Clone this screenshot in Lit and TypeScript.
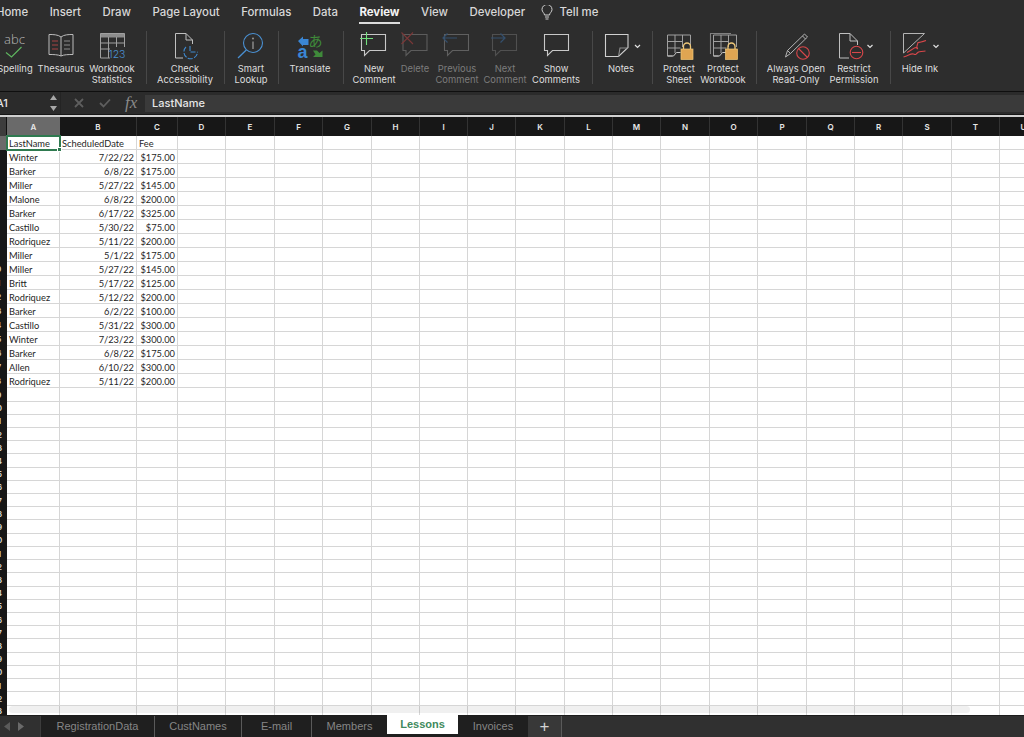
import { LitElement, html, css, svg, nothing } from 'lit';
import { customElement } from 'lit/decorators.js';

const TABS = ['Home', 'Insert', 'Draw', 'Page Layout', 'Formulas', 'Data', 'Review', 'View', 'Developer'];
const COLS = 'ABCDEFGHIJKLMNOPQRSTU'.split('');
const ROWS = [
  ['LastName', 'ScheduledDate', 'Fee'],
  ['Winter', '7/22/22', '$175.00'],
  ['Barker', '6/8/22', '$175.00'],
  ['Miller', '5/27/22', '$145.00'],
  ['Malone', '6/8/22', '$200.00'],
  ['Barker', '6/17/22', '$325.00'],
  ['Castillo', '5/30/22', '$75.00'],
  ['Rodriquez', '5/11/22', '$200.00'],
  ['Miller', '5/1/22', '$175.00'],
  ['Miller', '5/27/22', '$145.00'],
  ['Britt', '5/17/22', '$125.00'],
  ['Rodriquez', '5/12/22', '$200.00'],
  ['Barker', '6/2/22', '$100.00'],
  ['Castillo', '5/31/22', '$300.00'],
  ['Winter', '7/23/22', '$300.00'],
  ['Barker', '6/8/22', '$175.00'],
  ['Allen', '6/10/22', '$300.00'],
  ['Rodriquez', '5/11/22', '$200.00'],
];
const ROW_COUNT = 43;

const bubble = (x: number, c: string) => svg`
  <path d="M${x} 34.5H${x + 24}V50.5H${x + 8}L${x + 3} 55.5V50.5H${x}Z" fill="none" stroke=${c} stroke-width="1.1"/>`;

const chevron = (x: number) => svg`
  <path d="M${x - 2.5} 45l2.5 2.5 2.500-2.500" fill="none" stroke="#e0e0e0" stroke-width="1.2"/>`;

const lock = (x: number) => svg`
  <path d="M${x + 2.5} 49v-2.5a3.5 3.5 0 0 1 7 0V49" fill="none" stroke="#efc878" stroke-width="1.3"/>
  <rect x=${x} y="49" width="12" height="10.5" fill="#dfa552" stroke="#efc878" stroke-width=".7"/>`;

const sheetIcon = (x: number) => svg`
  <path d="M${x + 6} 56H${x + 1}V35H${x + 24}V47M${x + 1} 41.5H${x + 16}M${x + 1} 48H${x + 14}M${x + 8.5} 35V53M${x + 16} 35V47" fill="none" stroke="#a0a0a0" stroke-width="1"/>
  <path d="M${x + 1} 56H${x + 7}L${x + 10} 52.5H${x + 14}" fill="none" stroke="#c8c8c8" stroke-width="1"/>`;

const ICONS: Record<string, unknown> = {
  spelling: svg`
    <text x="14.500" y="44" text-anchor="middle" class="abc">abc</text>
    <path d="M6 52.500l5.500 4.500 10-10" fill="none" stroke="#5fb760" stroke-width="1.100"/>`,
  thesaurus: svg`
    <path d="M61 37c-3-2.500-8-2.500-12-2.500V54.500c4 0 9 0 12 1.500 3-1.500 8-1.500 12-1.500V34.500c-4 0-9 0-12 2.500zV56" fill="none" stroke="#bcbcbc" stroke-width="1"/>
    <path d="M52 41h6M52 45h6M52 49h6" stroke="#a84444" stroke-width="1.100"/>
    <path d="M64 41h6M64 45h6M64 49h6" stroke="#8c8c8c" stroke-width="1.100"/>`,
  stats: svg`
    <rect x="100.500" y="33.500" width="24" height="4" fill="#8c8c8c"/>
    <path d="M110 58H100.500V33.500H124.500V47M100.500 43H124.500M100.500 49H110M108.500 37V58M116.500 37V47" fill="none" stroke="#a0a0a0" stroke-width="1"/>
    <text x="125.500" y="58" text-anchor="end" class="num">123</text>`,
  check: svg`
    <path d="M183 58H175.500V33.500H186L192.500 40V44M186 33.500V40H192.500" fill="none" stroke="#c0c0c0" stroke-width="1"/>
    <path d="M186 47a6.800 6.800 0 1 0 11.500 5M190 46v6h7.500" fill="none" stroke="#3f8ad0" stroke-width="1.100" stroke-dasharray="5 1.500"/>`,
  smart: svg`
    <circle cx="253" cy="43" r="9.500" fill="none" stroke="#4a90d2" stroke-width="1.100"/>
    <path d="M246.300 50 238 58" stroke="#4a90d2" stroke-width="1.300"/>
    <path d="M253 41.500V49" stroke="#a0a0a0" stroke-width="1.200"/>
    <circle cx="253" cy="38.500" r=".9" fill="#a0a0a0"/>`,
  translate: svg`
    <path d="M298 41l5-4.500v2.500h5.500v6h-5.500v1.500z" fill="#3a86d4"/>
    <text x="302.500" y="58" text-anchor="middle" class="tr-a">a</text>
    <text x="315.500" y="46" text-anchor="middle" class="tr-j">あ</text>
    <path d="M322.500 57h-9.500l2.500-2.500-2.500-4h4l2.500 2.500 3-2.500z" fill="#3f8a3a"/>`,
  new: svg`${bubble(361.5, '#c8c8c8')}
    <path d="M366.500 32v13M360 38.500h13" stroke="#72e07e" stroke-width="1.100"/>`,
  delete: svg`${bubble(403, '#5c5c5c')}
    <path d="M401.500 32.500l11.500 11.500M413 32.500 401.500 44" stroke="#7a3838" stroke-width="1.100"/>`,
  previous: svg`${bubble(444.5, '#606060')}
    <path d="M443 38h14M447.500 33.500l-4.500 4.500 4.500 4.500" fill="none" stroke="#34506e" stroke-width="1.200"/>`,
  next: svg`${bubble(492.5, '#505050')}
    <path d="M491 38h14M500.500 33.500l4.500 4.500-4.500 4.500" fill="none" stroke="#34506e" stroke-width="1.200"/>`,
  show: svg`${bubble(544.5, '#c8c8c8')}`,
  notes: svg`
    <path d="M605.500 34.500H628V47.500L618.500 56.500H605.500Z" fill="none" stroke="#d0d0d0" stroke-width="1.100"/>
    <path d="M618.500 56.500 620 48H628" fill="none" stroke="#909090" stroke-width="1.100"/>
    ${chevron(637.5)}`,
  psheet: svg`${sheetIcon(666.5)}${lock(681)}`,
  pbook: svg`
    <path d="M710.500 54V33.500H731" fill="none" stroke="#808080" stroke-width="1.100"/>
    ${sheetIcon(712.5)}${lock(725.5)}`,
  readonly: svg`
    <path d="M785.500 57l2-6.500 17-16.500 3 3-17 16.500zM787.500 50.500l3 3M802.500 36l3 3" fill="none" stroke="#b4b4b4" stroke-width="1"/>
    <circle cx="803" cy="53" r="6.300" fill="none" stroke="#d8474a" stroke-width="1.100"/>
    <path d="M798.500 48.500l9 9" stroke="#d8474a" stroke-width="1.100"/>`,
  restrict: svg`
    <path d="M849 58H839.500V33.500H850L857.500 41V45M850 33.500V41H857.500" fill="none" stroke="#c0c0c0" stroke-width="1"/>
    <circle cx="856.500" cy="52.500" r="6.300" fill="#2d2d2d" stroke="#d8474a" stroke-width="1.100"/>
    <path d="M852 52.500h9" stroke="#d8474a" stroke-width="1.100"/>
    ${chevron(870)}`,
  ink: svg`
    <path d="M903.500 53V33.500H924.500Z" fill="none" stroke="#b4b4b4" stroke-width="1"/>
    <path d="M907 52.500c4-2 8-6 10-5s-2 4 1-5c2 0 5-1 8-2" fill="none" stroke="#d8474a" stroke-width="1.100"/>
    <path d="M903.500 57c5-1 7-4 10-3s1 1 5-2c2 0 4-1 7-1" fill="none" stroke="#d8474a" stroke-width="1.100"/>
    ${chevron(936)}`,
};

// w = slot width, c = icon centre on the page, dim = disabled command
type Cmd = { sep?: boolean; w: number; c?: number; icon?: string; label?: string[]; dim?: boolean };
const RIBBON: Cmd[] = [
  { w: 46, c: 15, icon: 'spelling', label: ['Spelling'] },
  { w: 46, c: 61, icon: 'thesaurus', label: ['Thesaurus'] },
  { w: 56, c: 112, icon: 'stats', label: ['Workbook', 'Statistics'] },
  { sep: true, w: 12 },
  { w: 66, c: 185, icon: 'check', label: ['Check', 'Accessibility'] },
  { sep: true, w: 12 },
  { w: 42, c: 251, icon: 'smart', label: ['Smart', 'Lookup'] },
  { sep: true, w: 12 },
  { w: 52, c: 310, icon: 'translate', label: ['Translate'] },
  { sep: true, w: 14 },
  { w: 48, c: 374, icon: 'new', label: ['New', 'Comment'] },
  { w: 34, c: 415, icon: 'delete', label: ['Delete'], dim: true },
  { w: 50, c: 457, icon: 'previous', label: ['Previous', 'Comment'], dim: true },
  { w: 46, c: 505, icon: 'next', label: ['Next', 'Comment'], dim: true },
  { w: 56, c: 556, icon: 'show', label: ['Show', 'Comments'] },
  { sep: true, w: 16 },
  { w: 42, c: 621, icon: 'notes', label: ['Notes'] },
  { sep: true, w: 20 },
  { w: 34, c: 679, icon: 'psheet', label: ['Protect', 'Sheet'] },
  { w: 54, c: 723, icon: 'pbook', label: ['Protect', 'Workbook'] },
  { sep: true, w: 12 },
  { w: 68, c: 796, icon: 'readonly', label: ['Always Open', 'Read-Only'] },
  { w: 48, c: 854, icon: 'restrict', label: ['Restrict', 'Permission'] },
  { sep: true, w: 24 },
  { w: 36, c: 920, icon: 'ink', label: ['Hide Ink'] },
];

const SHEETS = [
  ['RegistrationData', 'w-reg'],
  ['CustNames', 'w-cust'],
  ['E-mail', 'w-mail'],
  ['Members', 'w-mem'],
];

@customElement('app-root')
export class AppRoot extends LitElement {
  static styles = css`
    :host {
      display: flex;
      flex-direction: column;
      width: 1024px;
      height: 737px;
      overflow: hidden;
      background: #fff;
      font-family: Inter, "Liberation Sans", sans-serif;
    }

    .top {
      height: 91px;
      background: #2d2d2d;
      border-bottom: 1px solid #0f0f0f;
      flex: none;
    }
    .nav {
      display: flex;
      align-items: center;
      gap: 21.500px;
      height: 24px;
      margin-left: -4px;
      font-size: 11.400px;
      font-weight: 500;
      color: #d8d8d8;
    }
    .nav span { position: relative; line-height: 24px; white-space: nowrap; }
    .nav .on { color: #f4f4f4; font-weight: 700; }
    .nav .on::after {
      content: '';
      position: absolute;
      left: 0;
      right: 0;
      bottom: 0;
      height: 2px;
      background: #dcdcdc;
    }
    .tell { display: flex; align-items: center; gap: 7px; margin-left: -6px; }

    .ribbon {
      display: flex;
      margin: 7px 0 0 -8px;
      height: 56px;
    }
    .cmd {
      display: flex;
      flex-direction: column;
      align-items: center;
      flex: none;
    }
    .cmd svg { width: 40px; height: 30px; flex: none; overflow: visible; }
    .cmd .lbl {
      margin-top: 3px;
      font-size: 9.400px;
      line-height: 10.800px;
      text-align: center;
      white-space: nowrap;
      color: #dedede;
    }
    .cmd.dim .lbl { color: #7c7c7c; }
    .abc { font: 300 13px "Open Sans", sans-serif; fill: #b8b8b8; }
    .num { font: 300 10.500px Inter, sans-serif; fill: #4a90d2; }
    .tr-a { font: 700 18px "Liberation Sans", sans-serif; fill: #3a86d4; }
    .tr-j { font: 400 14px "Noto Sans CJK JP", sans-serif; fill: #3f8a3a; }
    .sep { display: flex; justify-content: center; flex: none; padding-bottom: 3px; }
    .sep i { display: block; width: 1px; background: #484848; }

    .formula {
      display: flex;
      align-items: center;
      height: 22px;
      background: #2b2b2b;
      flex: none;
      color: #e6e6e6;
      font-size: 11px;
      font-weight: 500;
    }
    .name {
      display: flex;
      align-items: center;
      justify-content: space-between;
      width: 60px;
      height: 100%;
      border-right: 1px solid #242424;
    }
    .name span { margin-left: -4px; }
    .stepper { margin-right: 2px; }
    .fbtns {
      display: flex;
      align-items: center;
      width: 84px;
      flex: none;
    }
    .fbtns svg { display: block; flex: none; }
    .x { margin-left: 13px; }
    .ok { margin-left: 15px; }
    .fx {
      font: italic 17px "Liberation Serif", serif;
      color: #8a8a8a;
      margin-left: 14px;
    }
    .input {
      flex: 1;
      height: 17px;
      line-height: 17px;
      margin-top: 1px;
      padding-left: 7px;
      background: #3a3a3a;
    }

    .gutter {
      height: 3px;
      flex: none;
      box-sizing: border-box;
      background: #d0d0d0;
      border-top: 1px solid #161616;
    }

    .sheet {
      position: relative;
      flex: 1;
      min-height: 0;
      display: grid;
      grid-template-columns: 7px 53px 77px 41px 48px 49px 48px 49px 48px 48px 48px 49px 48px 48px 49px 48px 49px 48px 48px 49px 48px 48px;
      grid-template-rows: 19px repeat(18, 14.020px) repeat(24, 13.220px) 10px;
      overflow: hidden;
      font-family: Lato, "Open Sans", sans-serif;
      font-size: 9.300px;
      color: #1f1f1f;
    }
    .corner {
      background: #3d3d3d;
      border-right: 1px solid #111;
    }
    .ch {
      display: flex;
      align-items: center;
      justify-content: center;
      background: #171717;
      border-right: 1px solid #333;
      color: #e8e8e8;
      font: 600 8px Inter, sans-serif;
    }
    .ch.sel { background: #6a6a6a; border-right: 0; }
    .rh {
      display: flex;
      justify-content: flex-end;
      align-items: center;
      overflow: hidden;
      background: #171717;
      color: #d8d8d8;
      font: 600 8px Inter, sans-serif;
    }
    .rh span { flex: none; width: 20px; text-align: center; }
    .rh.sel { background: #6a6a6a; color: #6a6a6a; }
    .cell {
      box-sizing: border-box;
      border-right: 1px solid #d6d6d6;
      border-bottom: 1px solid #d6d6d6;
      padding: 1px 2px 0;
      line-height: 13px;
      white-space: nowrap;
      overflow: hidden;
    }
    .cell.r { text-align: right; }
    .selected {
      position: relative;
      overflow: visible;
      outline: 2px solid #2f7a50;
      outline-offset: -1px;
      z-index: 1;
    }
    .selected::after {
      content: '';
      position: absolute;
      right: -3px;
      bottom: -3px;
      width: 5px;
      height: 5px;
      background: #2f7a50;
      border: 1px solid #fff;
      box-sizing: border-box;
    }
    .hscroll {
      position: absolute;
      left: 9px;
      right: 54px;
      bottom: 2px;
      height: 7px;
      border-radius: 4px;
      background: rgba(0, 0, 0, 0.06);
      z-index: 2;
    }

    .tabs {
      display: flex;
      height: 22px;
      flex: none;
      background: #303030;
      border-top: 1px solid #1c1c1c;
      box-sizing: border-box;
      font: 400 11px "Liberation Sans", sans-serif;
      color: #868686;
    }
    .arrows {
      display: flex;
      align-items: center;
      gap: 6px;
      width: 40px;
      padding-left: 4px;
      box-sizing: border-box;
      flex: none;
    }
    .tabrow { display: flex; background: #1f1f1f; flex: none; }
    .tab {
      display: flex;
      align-items: center;
      justify-content: center;
      padding-bottom: 1px;
      border-right: 1px solid #5a5a5a;
      box-sizing: border-box;
      height: 100%;
    }
    .w-reg { width: 115px; border-left: 1px solid #3c3c3c; }
    .w-cust { width: 87px; }
    .w-mail { width: 70px; }
    .w-mem { width: 75px; border-right: 0; }
    .w-inv { width: 70px; border-right: 0; }
    .w-les {
      width: 71px;
      height: 19px;
      margin-top: -1px;
      background: #fff;
      color: #3f8a5e;
      font-weight: 700;
      border: 0;
    }
    .plus {
      display: flex;
      align-items: center;
      justify-content: center;
      width: 34px;
      flex: none;
      border-right: 1px solid #5a5a5a;
      box-sizing: border-box;
      background: #383838;
      color: #d4d4d4;
      font-size: 17px;
    }
  `;

  renderCmd(c: Cmd) {
    if (c.sep) {
      return html`<div class="sep" style="width:${c.w}px"><i></i></div>`;
    }
    return html`
      <div class="cmd ${c.dim ? 'dim' : ''}" style="width:${c.w}px">
        <svg viewBox="${c.c! - 20} 31 40 30">${ICONS[c.icon!]}</svg>
        <div class="lbl">${c.label!.map((l) => html`${l}<br />`)}</div>
      </div>
    `;
  }

  renderRow(i: number) {
    const data = ROWS[i];
    return html`
      <div class="rh ${i === 0 ? 'sel' : ''}"><span>${i + 1}</span></div>
      ${COLS.map((_, c) => {
        const val = data ? data[c] : undefined;
        const right = i > 0 && c > 0;
        const cls = `cell ${right ? 'r' : ''} ${i === 0 && c === 0 ? 'selected' : ''}`;
        return html`<div class=${cls}>${val ?? nothing}</div>`;
      })}
    `;
  }

  render() {
    return html`
      <div class="top">
        <div class="nav">
          ${TABS.map((t) => html`<span class=${t === 'Review' ? 'on' : ''}>${t}</span>`)}
          <span class="tell">
            <svg width="12" height="15" viewBox="0 0 12 15">
              <path d="M3.500 10c0-2-2.500-3-2.500-5.500a5 5 0 0 1 10 0C11 7 8.500 8 8.500 10zM4 12h4M4.500 14h3" fill="none" stroke="#d0d0d0" stroke-width="1"/>
            </svg>
            Tell me
          </span>
        </div>
        <div class="ribbon">${RIBBON.map((c) => this.renderCmd(c))}</div>
      </div>

      <div class="formula">
        <div class="name">
          <span>A1</span>
          <svg class="stepper" width="9" height="18" viewBox="0 0 9 18">
            <path d="M4.500 1 8 6H1zM4.500 17 1 12h7z" fill="#a8a8a8"/>
          </svg>
        </div>
        <div class="fbtns">
          <svg class="x" width="10" height="10" viewBox="0 0 10 10">
            <path d="M1 1l8 8M9 1 1 9" stroke="#5e5e5e" stroke-width="1.800"/>
          </svg>
          <svg class="ok" width="12" height="10" viewBox="0 0 12 10">
            <path d="M1 5l3.500 3.500L11 1.500" fill="none" stroke="#5e5e5e" stroke-width="1.800"/>
          </svg>
          <span class="fx">fx</span>
        </div>
        <div class="input">LastName</div>
      </div>
      <div class="gutter"></div>

      <div class="sheet">
        <div class="corner"></div>
        ${COLS.map((c) => html`<div class="ch ${c === 'A' ? 'sel' : ''}">${c}</div>`)}
        ${Array.from({ length: ROW_COUNT }, (_, i) => this.renderRow(i))}
        <div class="hscroll"></div>
      </div>

      <div class="tabs">
        <div class="arrows">
          <svg width="7" height="9" viewBox="0 0 7 9"><path d="M6 0v9L0 4.500z" fill="#5a5a5a"/></svg>
          <svg width="7" height="9" viewBox="0 0 7 9"><path d="M1 0v9l6-4.500z" fill="#6a6a6a"/></svg>
        </div>
        <div class="tabrow">
          ${SHEETS.map(([t, w]) => html`<div class="tab ${w}">${t}</div>`)}
          <div class="tab w-les">Lessons</div>
          <div class="tab w-inv">Invoices</div>
        </div>
        <div class="plus">+</div>
      </div>
    `;
  }
}
